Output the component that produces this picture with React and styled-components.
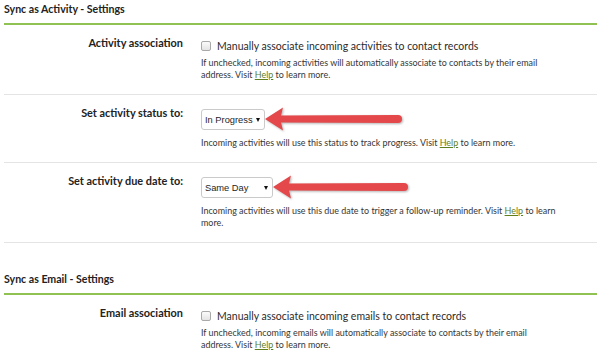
import React from "react";
import styled, { createGlobalStyle } from "styled-components";

const GlobalStyle = createGlobalStyle`
  html, body {
    margin: 0;
    padding: 0;
    background: #ffffff;
  }
  body {
    font-family: Lato, "Open Sans", sans-serif;
    color: #2f2f2f;
  }
`;

const Page = styled.div`
  width: 600px;
  height: 353px;
  overflow: hidden;
  padding: 0 3px 0 4px;
  box-sizing: border-box;
`;

const Section = styled.section`
  margin-top: ${p => p.$top || 0}px;
`;

const Heading = styled.h2`
  margin: 0;
  padding: 2px 0 7px;
  font-size: 10.6px;
  line-height: 14px;
  font-weight: 700;
  color: #222;
  border-bottom: 2px solid #8fc253;
`;

const Row = styled.div`
  display: grid;
  grid-template-columns: 179px 1fr;
  column-gap: 18px;
  padding-bottom: 13px;
  border-bottom: ${p => (p.$last ? "none" : "1px solid #e4e4e4")};
`;

const Label = styled.div`
  padding-top: 11px;
  text-align: right;
  font-size: 10.9px;
  line-height: 14px;
  font-weight: 700;
  color: #222;
`;

const Control = styled.div`
  padding-top: 14px;
`;

const CheckLine = styled.label`
  display: flex;
  align-items: center;
  height: 14px;
  font-size: 10.5px;
  color: #2c2c2c;
`;

const Box = styled.span`
  width: 8px;
  height: 8px;
  margin-right: 6px;
  border: 1px solid #a9a9a9;
  border-radius: 2px;
  background: linear-gradient(#fbfbfb, #e4e4e4);
  flex: none;
`;

const SelectLine = styled.div`
  display: flex;
  align-items: center;
  height: 21px;
`;

const SelectBox = styled.div`
  width: ${p => p.$width}px;
  height: 21px;
  box-sizing: border-box;
  display: flex;
  align-items: center;
  justify-content: space-between;
  padding: 0 4px 0 3px;
  border: 1px solid #cacaca;
  border-radius: 3px;
  background: #fff;
  font-family: "Liberation Sans", Arial, sans-serif;
  font-size: 9.3px;
  white-space: nowrap;
  color: #1e1e1e;
  flex: none;
`;

const Caret = styled.span`
  width: 0;
  height: 0;
  border-left: 2.5px solid transparent;
  border-right: 2.5px solid transparent;
  border-top: 4px solid #111;
  flex: none;
`;

const Help = styled.p`
  margin: ${p => (p.$afterSelect ? 7 : 4)}px 0 0;
  font-size: 8.95px;
  line-height: 12px;
  color: #363636;
`;

const HelpLink = styled.a`
  color: #5f7f1c;
  text-decoration: underline;
`;

const Arrow = styled.svg`
  flex: none;
  margin-left: -1px;
  filter: drop-shadow(1px 1px 1px rgba(0, 0, 0, 0.3));
`;

const RedArrow = ({ length }) => (
  <Arrow width={length + 4} height="28" viewBox={`0 0 ${length + 4} 28`}>
    <path
      d={`M1 13 L19 1.5 L17 9.5 L${length - 4} 9 Q${length} 9 ${length} 13 Q${length} 17 ${length - 4} 17 L17 16.5 L19 24.5 Z`}
      fill="#e4484a"
    />
  </Arrow>
);

const Select = ({ value, width, arrow }) => (
  <SelectLine>
    <SelectBox $width={width}>
      <span>{value}</span>
      <Caret />
    </SelectBox>
    <RedArrow length={arrow} />
  </SelectLine>
);

const Visit = () => (
  <>
    Visit <HelpLink href="#">Help</HelpLink> to learn
  </>
);

export default function App() {
  return (
    <Page>
      <GlobalStyle />
      <Section>
        <Heading>Sync as Activity - Settings</Heading>
        <Row>
          <Label>Activity association</Label>
          <Control>
            <CheckLine>
              <Box />
              Manually associate incoming activities to contact records
            </CheckLine>
            <Help>
              If unchecked, incoming activities will automatically associate to contacts by their email
              <br />
              address. <Visit /> more.
            </Help>
          </Control>
        </Row>
        <Row>
          <Label>Set activity status to:</Label>
          <Control>
            <Select value="In Progress" width={64} arrow={138} />
            <Help $afterSelect>
              Incoming activities will use this status to track progress. <Visit /> more.
            </Help>
          </Control>
        </Row>
        <Row>
          <Label>Set activity due date to:</Label>
          <Control>
            <Select value="Same Day" width={72} arrow={136} />
            <Help $afterSelect>
              Incoming activities will use this due date to trigger a follow-up reminder. <Visit />
              <br />
              more.
            </Help>
          </Control>
        </Row>
      </Section>
      <Section $top={27}>
        <Heading>Sync as Email - Settings</Heading>
        <Row $last>
          <Label>Email association</Label>
          <Control>
            <CheckLine>
              <Box />
              Manually associate incoming emails to contact records
            </CheckLine>
            <Help>
              If unchecked, incoming emails will automatically associate to contacts by their email
              <br />
              address. <Visit /> more.
            </Help>
          </Control>
        </Row>
      </Section>
    </Page>
  );
}
